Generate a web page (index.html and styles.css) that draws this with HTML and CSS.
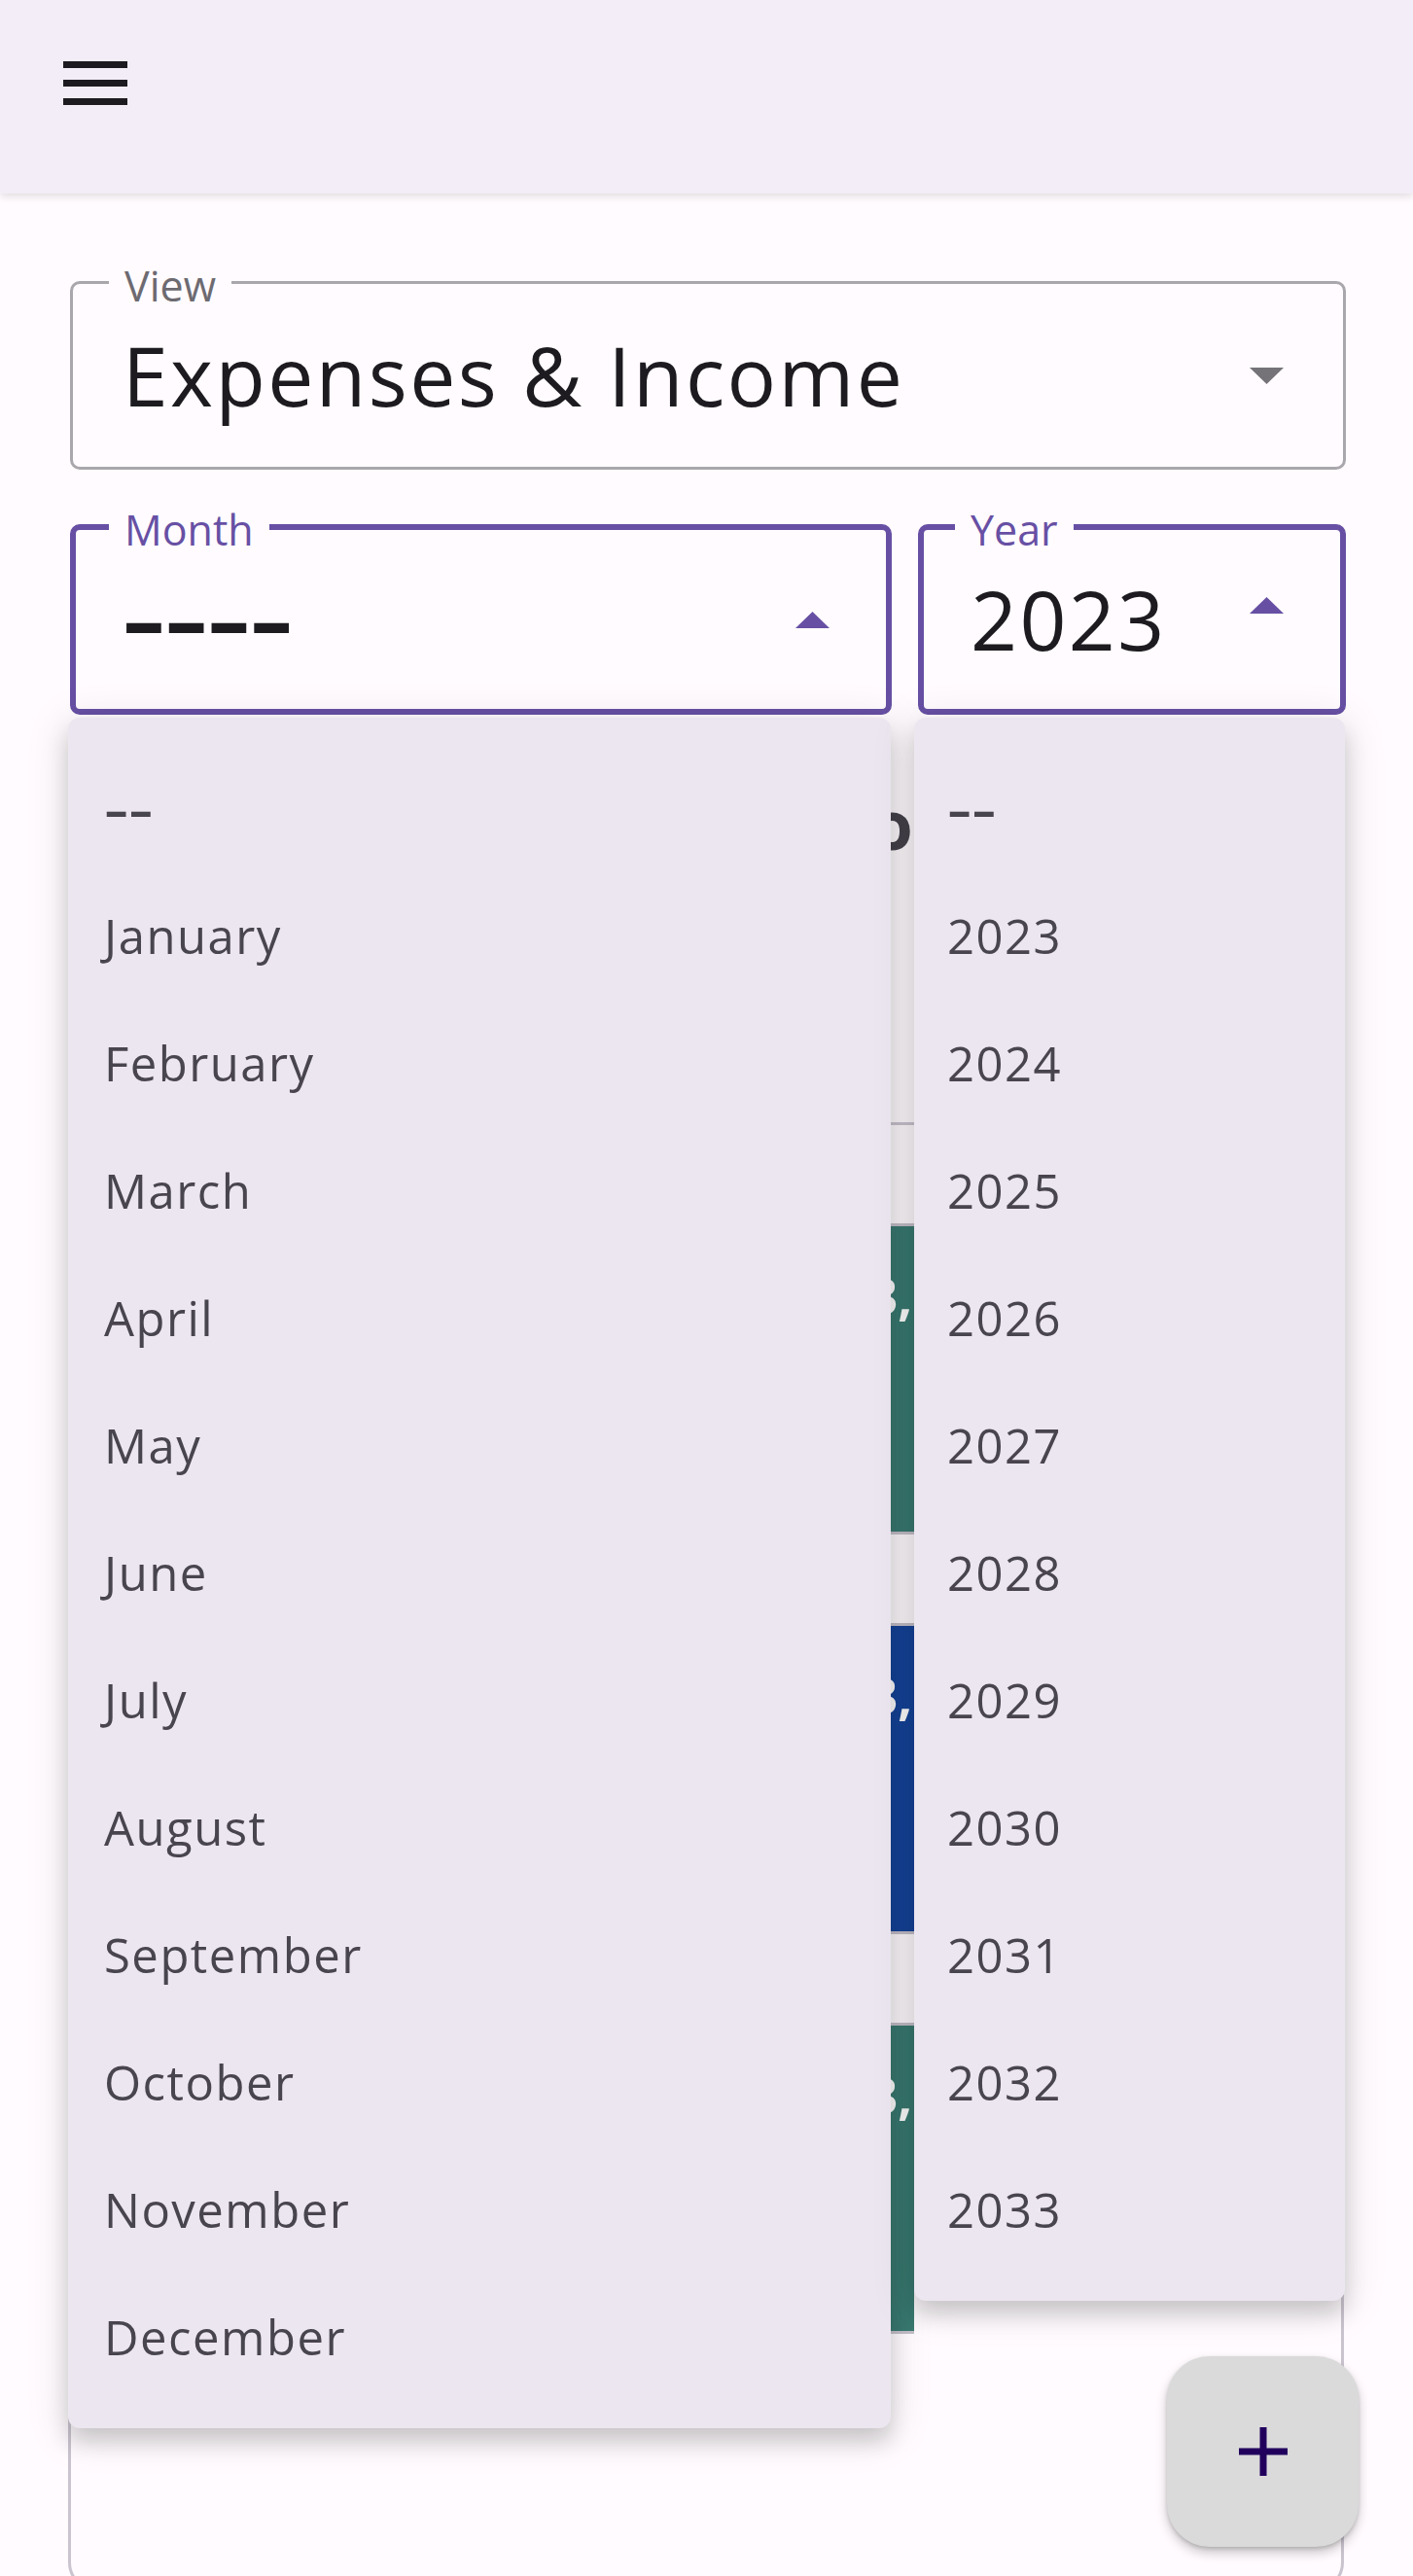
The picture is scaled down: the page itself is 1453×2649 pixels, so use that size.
FILE: index.html
```html
<!DOCTYPE html>
<html lang="en">
<head>
<meta charset="utf-8">
<title>Expenses &amp; Income</title>
<link rel="stylesheet" href="styles.css">
</head>
<body>
<header class="topbar">
  <button class="menu-btn" aria-label="Open navigation menu">
    <svg width="66" height="45" viewBox="0 0 66 45" aria-hidden="true">
      <rect x="0" y="0" width="66" height="7"/>
      <rect x="0" y="19" width="66" height="7"/>
      <rect x="0" y="38" width="66" height="7"/>
    </svg>
  </button>
</header>

<main class="content">
  <div class="field field-view">
    <span class="field-label">View</span>
    <span class="field-value">Expenses &amp; Income</span>
    <svg class="arrow arrow-down" width="35" height="17" viewBox="0 0 35 17" aria-hidden="true"><path d="M0 0H35L17.5 17Z"/></svg>
  </div>

  <div class="row">
    <div class="field field-focused field-month">
      <span class="field-label">Month</span>
      <span class="field-value"><span class="dashes">----</span></span>
      <svg class="arrow arrow-up" width="35" height="17" viewBox="0 0 35 17" aria-hidden="true"><path d="M0 17H35L17.5 0Z"/></svg>
      <ul class="menu menu-month">
        <li class="menu-item"><span class="menu-dashes">--</span></li>
        <li class="menu-item">January</li>
        <li class="menu-item">February</li>
        <li class="menu-item">March</li>
        <li class="menu-item">April</li>
        <li class="menu-item">May</li>
        <li class="menu-item">June</li>
        <li class="menu-item">July</li>
        <li class="menu-item">August</li>
        <li class="menu-item">September</li>
        <li class="menu-item">October</li>
        <li class="menu-item">November</li>
        <li class="menu-item">December</li>
      </ul>
    </div>
    <div class="field field-focused field-year">
      <span class="field-label">Year</span>
      <span class="field-value">2023</span>
      <svg class="arrow arrow-up arrow-year" width="35" height="17" viewBox="0 0 35 17" aria-hidden="true"><path d="M0 17H35L17.5 0Z"/></svg>
      <ul class="menu menu-year">
        <li class="menu-item"><span class="menu-dashes">--</span></li>
        <li class="menu-item">2023</li>
        <li class="menu-item">2024</li>
        <li class="menu-item">2025</li>
        <li class="menu-item">2026</li>
        <li class="menu-item">2027</li>
        <li class="menu-item">2028</li>
        <li class="menu-item">2029</li>
        <li class="menu-item">2030</li>
        <li class="menu-item">2031</li>
        <li class="menu-item">2032</li>
        <li class="menu-item">2033</li>
      </ul>
    </div>
  </div>

  <h2 class="summary-title">Summary Info</h2>

  <section class="card">
    <div class="entries">
      <div class="entry entry-teal"><span class="entry-title">Expenses &amp; Income, 2023,</span></div>
      <div class="entry entry-blue"><span class="entry-title">Expenses &amp; Income, 2023,</span></div>
      <div class="entry entry-teal"><span class="entry-title">Expenses &amp; Income, 2023,</span></div>
    </div>
  </section>
</main>

<button class="fab" aria-label="Add">
  <svg width="50" height="50" viewBox="0 0 50 50" aria-hidden="true">
    <rect x="21.5" y="0" width="7" height="50"/>
    <rect x="0" y="21.5" width="50" height="7"/>
  </svg>
</button>
</body>
</html>
```

FILE: styles.css
```css
* {
  box-sizing: border-box;
}

html,
body {
  margin: 0;
  height: 2649px;
  overflow: hidden;
}

body {
  background: #fffbfe;
  font-family: "Open Sans", "Noto Sans", sans-serif;
  color: #1d1b20;
}

/* ---------- top app bar ---------- */
.topbar {
  height: 199px;
  background: #f3edf7;
  box-shadow: 0 3px 8px rgba(0, 0, 0, 0.12);
  padding: 63px 0 0 65px;
  position: relative;
  z-index: 2;
}

.menu-btn {
  border: 0;
  background: none;
  padding: 0;
  display: block;
  fill: #1d1b20;
}

.menu-btn svg {
  display: block;
}

/* ---------- content ---------- */
.content {
  padding: 90px 69px 0 72px;
}

.field {
  position: relative;
  display: flex;
  align-items: center;
  border-radius: 10px;
}

.field-view {
  height: 194px;
  border: 3px solid #a9a7ac;
  padding-left: 51px;
}

.field-label {
  position: absolute;
  font-size: 43px;
  line-height: 57px;
  padding: 0 16px;
  background: #fffbfe;
  white-space: nowrap;
}

.field-view .field-label {
  top: -27px;
  left: 37px;
  color: #6d6a71;
}

.field-value {
  font-size: 84px;
  letter-spacing: 2.4px;
  line-height: 114px;
  color: #1d1b20;
  white-space: nowrap;
}

.arrow {
  margin-left: auto;
  flex: none;
  display: block;
}

.arrow-down {
  fill: #757377;
  margin-right: 61px;
}

.row {
  display: flex;
  gap: 27px;
  margin-top: 56px;
  position: relative;
  z-index: 3;
}

.field-focused {
  height: 196px;
  border: 6px solid #6750a4;
  padding-left: 48px;
}

.field-focused .field-label {
  top: -29px;
  left: 34px;
  color: #6750a4;
}

.field-year .field-label {
  left: 32px;
}

.field-month {
  flex: 1;
}

.field-year {
  width: 440px;
  flex: none;
}

.arrow-up {
  fill: #6750a4;
  margin-right: 58px;
}

.arrow-year {
  margin-bottom: 30px;
}

.dashes {
  display: inline-block;
  letter-spacing: 0;
  font-weight: 700;
  transform: scaleX(1.62);
  transform-origin: left center;
}

/* ---------- dropdown menus ---------- */
.menu {
  position: absolute;
  top: 193px;
  margin: 0;
  padding: 28px 0;
  list-style: none;
  background: #ece6f0;
  border-radius: 12px;
  box-shadow: 0 14px 22px rgba(0, 0, 0, 0.16), 0 6px 40px 8px rgba(0, 0, 0, 0.08);
  z-index: 5;
}

.menu-month {
  left: -8px;
  width: 846px;
}

.menu-year {
  left: -10px;
  width: 443px;
}

.menu-item {
  height: 131px;
  line-height: 131px;
  padding-left: 34px;
  font-size: 49px;
  letter-spacing: 1.5px;
  color: #49454f;
  white-space: nowrap;
}

.menu-month .menu-item {
  padding-left: 37px;
}

.menu-dashes {
  display: inline-block;
  letter-spacing: 0;
  font-weight: 600;
  transform: scale(1.6, 1.1);
  transform-origin: left center;
}

/* ---------- content behind the menus ---------- */
.summary-title {
  margin: 64px 0 0;
  padding-right: 72px;
  font-size: 70px;
  line-height: 96px;
  font-weight: 700;
  text-align: center;
  color: #46434c;
  white-space: nowrap;
}

.card {
  margin: 259px 2px 0 -2px;
  border: 3px solid #cac4d0;
  border-radius: 30px;
  padding: 101px 0 262px;
}

.entries {
  display: flex;
  flex-direction: column;
  gap: 91px;
}

.entry {
  width: 867px;
  height: 320px;
  border-top: 3px solid #c5c0ca;
  border-bottom: 3px solid #c5c0ca;
  padding: 35px 2px 0 34px;
  overflow: hidden;
}

.entry-teal {
  background: #3a7b72;
}

.entry-blue {
  background: #15449a;
}

.entry-title {
  display: block;
  font-size: 52px;
  line-height: 72px;
  font-weight: 700;
  text-align: right;
  color: #ffffff;
  white-space: nowrap;
}

/* ---------- floating action button ---------- */
.fab {
  position: fixed;
  right: 56px;
  bottom: 30px;
  width: 197px;
  height: 196px;
  border: 0;
  border-radius: 44px;
  background: #dadada;
  box-shadow: 0 6px 12px rgba(0, 0, 0, 0.22), 0 2px 4px rgba(0, 0, 0, 0.15);
  display: flex;
  align-items: center;
  justify-content: center;
  fill: #21005d;
  z-index: 6;
}

.fab svg {
  display: block;
}
```
